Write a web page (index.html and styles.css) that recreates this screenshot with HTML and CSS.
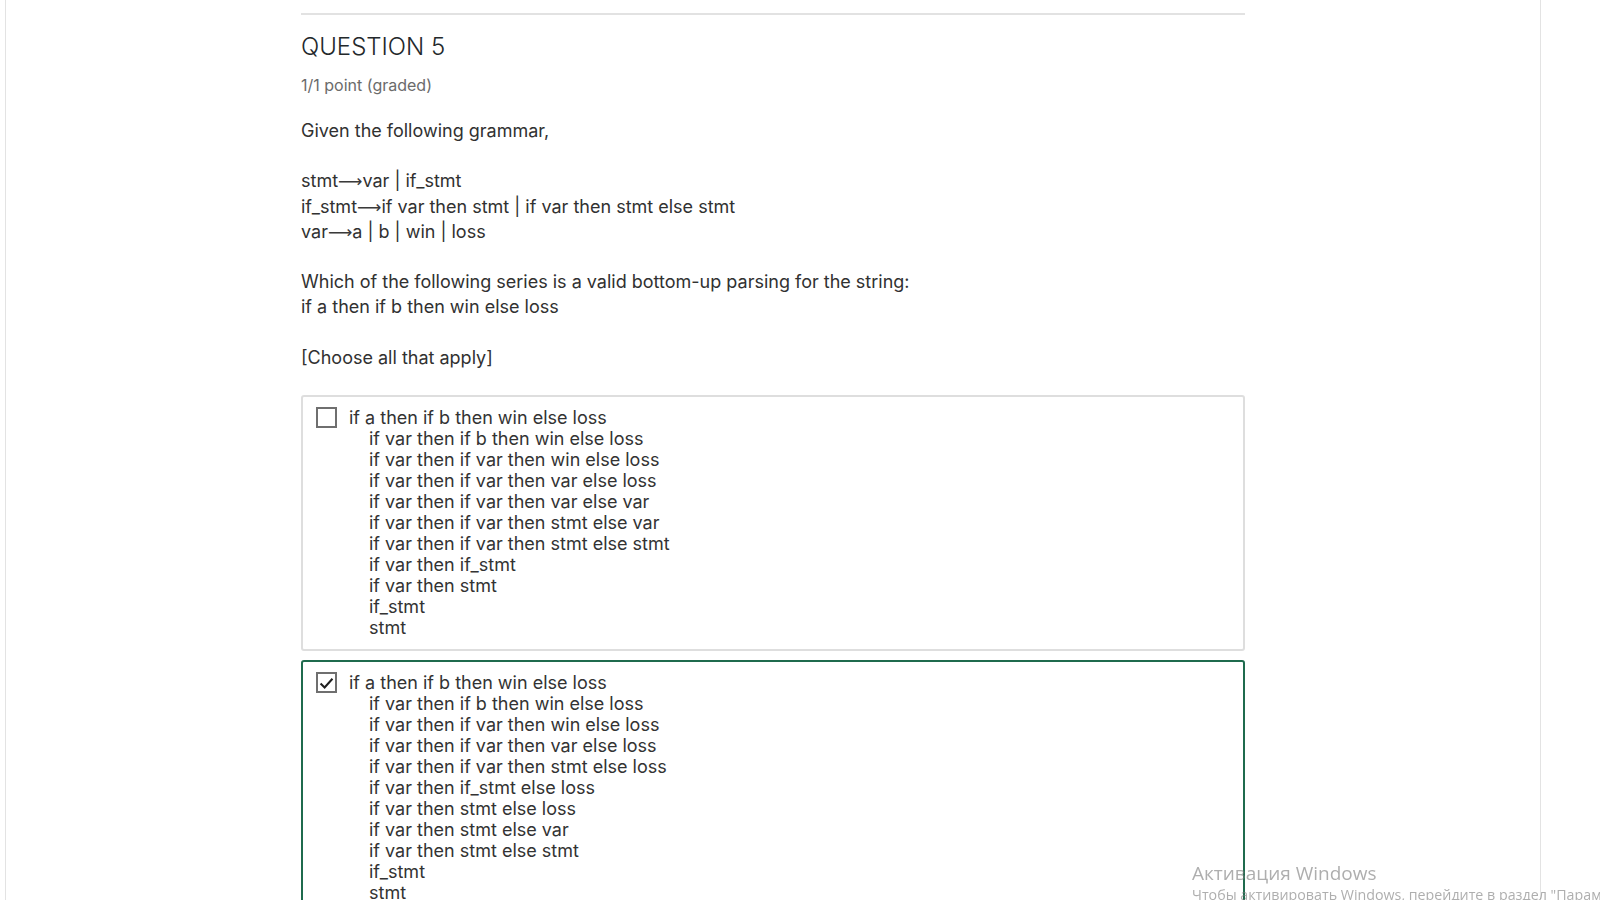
FILE: index.html
```html
<!DOCTYPE html>
<html lang="en">
<head>
<meta charset="utf-8">
<title>Question 5</title>
<link rel="stylesheet" href="styles.css">
</head>
<body>
<div class="page">
  <div class="content">
    <div class="divider"></div>
    <h3 class="q-title">QUESTION 5</h3>
    <div class="q-points">1/1 point (graded)</div>
    <div class="q-body">
      <p>Given the following grammar,</p>
      <p>stmt<span class="arr">⟶</span>var | if_stmt<br>if_stmt<span class="arr">⟶</span>if var then stmt | if var then stmt else stmt<br>var<span class="arr">⟶</span>a | b | win | loss</p>
      <p>Which of the following series is a valid bottom-up parsing for the string:<br>if a then if b then win else loss</p>
      <p>[Choose all that apply]</p>
    </div>
    <div class="choices">
      <label class="choice">
        <span class="box"></span>
        <span class="lines">
          <span class="first">if a then if b then win else loss</span>
          <span class="rest">
            <span>if var then if b then win else loss</span>
            <span>if var then if var then win else loss</span>
            <span>if var then if var then var else loss</span>
            <span>if var then if var then var else var</span>
            <span>if var then if var then stmt else var</span>
            <span>if var then if var then stmt else stmt</span>
            <span>if var then if_stmt</span>
            <span>if var then stmt</span>
            <span>if_stmt</span>
            <span>stmt</span>
          </span>
        </span>
      </label>
      <label class="choice selected">
        <span class="box checked"><svg viewBox="0 0 20 20" width="18" height="18"><path d="M3 10.5 L7.8 15.2 L17 5" fill="none" stroke="#1e1e1e" stroke-width="2.4"/></svg></span>
        <span class="lines">
          <span class="first">if a then if b then win else loss</span>
          <span class="rest">
            <span>if var then if b then win else loss</span>
            <span>if var then if var then win else loss</span>
            <span>if var then if var then var else loss</span>
            <span>if var then if var then stmt else loss</span>
            <span>if var then if_stmt else loss</span>
            <span>if var then stmt else loss</span>
            <span>if var then stmt else var</span>
            <span>if var then stmt else stmt</span>
            <span>if_stmt</span>
            <span>stmt</span>
          </span>
        </span>
      </label>
    </div>
  </div>
</div>
<div class="watermark">
  <div class="wm-title">Активация Windows</div>
  <div class="wm-sub">Чтобы активировать Windows, перейдите в раздел "Параметры".</div>
</div>
</body>
</html>
```
FILE: styles.css
```css
html, body {
  margin: 0;
  padding: 0;
  background: #ffffff;
  overflow: hidden;
}
body {
  font-family: Inter, "Noto Sans", sans-serif;
  color: #333333;
}
.page {
  margin-left: 5px;
  width: 1536px;
  min-height: 100vh;
  box-sizing: border-box;
  border-left: 1px solid #e3e3e3;
  border-right: 1px solid #e3e3e3;
}
.content {
  margin-left: 295px;
  width: 944px;
  padding-top: 13px;
}
.divider {
  border-top: 2px solid #e2e2e2;
}
.q-title {
  margin: 17px 0 0 0;
  font-size: 24px;
  font-weight: 300;
  line-height: 30px;
  color: #23282b;
  letter-spacing: 0;
}
.q-points {
  margin-top: 13px;
  font-size: 16px;
  line-height: 20px;
  color: #6b6b6b;
}
.q-body {
  margin-top: 23px;
  font-size: 18px;
  line-height: 25.2px;
  color: #313131;
}
.q-body p {
  margin: 0 0 25.2px 0;
}
.arr {
  font-family: "DejaVu Sans", sans-serif;
  font-size: 17px;
  line-height: 0;
  color: #3a3a3a;
}
.choices {
  margin-top: 13px;
  display: flex;
  flex-direction: column;
  gap: 9px;
}
.choice {
  display: flex;
  align-items: flex-start;
  gap: 12px;
  border: 2px solid #dedede;
  border-radius: 3px;
  padding: 10px 13px 11px 13px;
  font-size: 18px;
  line-height: 21px;
  color: #333333;
}
.choice.selected {
  border-color: #1f6b4e;
}
.box {
  flex: none;
  width: 21px;
  height: 21px;
  box-sizing: border-box;
  border: 2px solid #6f6f6f;
  display: flex;
  align-items: center;
  justify-content: center;
}
.lines {
  display: flex;
  flex-direction: column;
}
.rest {
  display: flex;
  flex-direction: column;
  padding-left: 20px;
}
.watermark {
  position: fixed;
  left: 1192px;
  top: 862px;
  font-family: "Open Sans", "Noto Sans", sans-serif;
  color: rgba(120, 120, 120, 0.6);
  white-space: nowrap;
  pointer-events: none;
}
.wm-title {
  font-size: 19px;
  line-height: 23px;
}
.wm-sub {
  font-size: 14.25px;
  line-height: 19px;
}
```
